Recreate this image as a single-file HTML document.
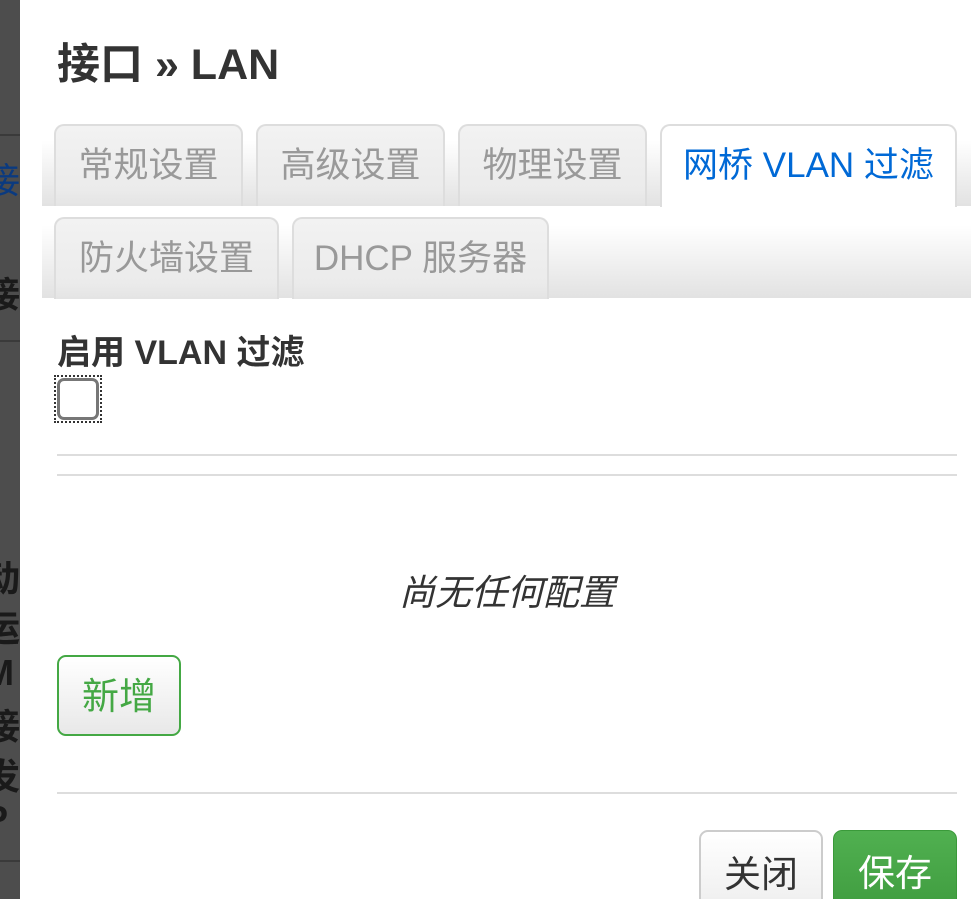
<!DOCTYPE html>
<html><head><meta charset="utf-8"><style>
*{box-sizing:border-box;margin:0;padding:0}
html,body{width:980px;height:899px;overflow:hidden}
body{background:#fff;font-family:"Liberation Sans","Noto Sans CJK SC",sans-serif;position:relative}
.bd{position:absolute;left:0;top:0;width:20px;height:899px;background:#4d4d4d;overflow:hidden;color:#1a1a1a;font-weight:bold;font-size:36px}
.bd div{position:absolute;left:-16px;white-space:nowrap}
.ab{position:absolute;white-space:nowrap}
.strip{position:absolute;left:42px;width:929px;background:linear-gradient(#fff 20%,#e2e2e2)}
.tab{position:absolute;height:82px;border:2px solid #ddd;border-bottom:none;border-radius:10px 10px 0 0;background:linear-gradient(#f2f2f2,#ebebeb 80%,#e4e4e4);color:#999;font-size:35px;text-align:center;line-height:80px;white-space:nowrap}
.tab.act{background:#fff;color:#0069d6;height:83px}
.hr{position:absolute;left:57px;width:900px;height:2px;background:#ddd}
.btn{position:absolute;border-radius:9px;font-size:37px;text-align:center}
</style></head><body>
<div class="bd">
<div style="top:134px;height:2px;width:40px;background:#3a3a3a;left:0"></div>
<div style="top:152px;color:#0a3a80;font-weight:normal">接</div>
<div style="top:266px">接</div>
<div style="top:340px;height:2px;width:40px;background:#3a3a3a;left:0"></div>
<div style="top:550px">动</div>
<div style="top:600px">运</div>
<div style="top:652px">M</div>
<div style="top:698px">接</div>
<div style="top:748px">发</div>
<div style="top:798px">P</div>
<div style="top:860px;height:2px;width:40px;background:#3a3a3a;left:0"></div>
</div>
<div class="ab" style="left:57px;top:30px;font-size:43px;font-weight:bold;color:#333">接口 » LAN</div>
<div class="strip" style="top:124px;height:82px"></div>
<div class="strip" style="top:207px;height:91px"></div>
<div class="tab" style="left:54px;top:124px;width:189px">常规设置</div>
<div class="tab" style="left:256px;top:124px;width:189px">高级设置</div>
<div class="tab" style="left:458px;top:124px;width:189px">物理设置</div>
<div class="tab act" style="left:660px;top:124px;width:297px">网桥 VLAN 过滤</div>
<div class="tab" style="left:54px;top:217px;width:225px">防火墙设置</div>
<div class="tab" style="left:292px;top:217px;width:257px">DHCP 服务器</div>
<div class="ab" style="left:57px;top:325px;font-size:34px;font-weight:bold;color:#333">启用 VLAN 过滤</div>
<div class="ab" style="left:54px;top:375px;width:48px;height:48px;border:2px dotted #333"></div>
<div class="ab" style="left:57px;top:378px;width:42px;height:42px;border:3px solid #777;border-radius:7px;background:#fff"></div>
<div class="hr" style="top:454px"></div>
<div class="hr" style="top:474px"></div>
<div class="ab" style="left:0;width:1014px;top:564px;text-align:center;font-size:36px;font-style:italic;color:#333">尚无任何配置</div>
<div class="btn" style="left:57px;top:655px;width:124px;height:81px;border:2px solid #44a844;color:#44a844;background:linear-gradient(#fff,#e8e8e8);line-height:79px">新增</div>
<div class="hr" style="top:792px"></div>
<div class="btn" style="left:699px;top:830px;width:124px;height:90px;border:2px solid #ccc;color:#333;background:linear-gradient(#fff,#ececec);line-height:86px">关闭</div>
<div class="btn" style="left:833px;top:830px;width:124px;height:90px;border:1px solid #3a9a3a;color:#fff;background:linear-gradient(#50b050,#3e9a3e);line-height:86px">保存</div>
</body></html>
